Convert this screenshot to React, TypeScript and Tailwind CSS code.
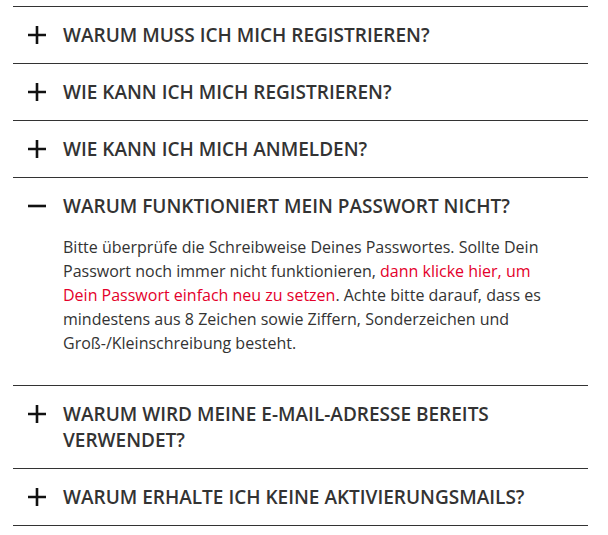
import React, { useState } from 'react'

type Item = { q: string; a?: React.ReactNode }

const items: Item[] = [
  { q: 'Warum muss ich mich registrieren?' },
  { q: 'Wie kann ich mich registrieren?' },
  { q: 'Wie kann ich mich anmelden?' },
  {
    q: 'Warum funktioniert mein Passwort nicht?',
    a: (
      <>
        Bitte überprüfe die Schreibweise Deines Passwortes. Sollte Dein Passwort noch immer nicht funktionieren,{' '}
        <a href="#" className="text-[#e4002b]">
          dann klicke hier, um Dein Passwort einfach neu zu setzen
        </a>
        . Achte bitte darauf, dass es mindestens aus 8 Zeichen sowie Ziffern, Sonderzeichen und Groß-/Kleinschreibung besteht.
      </>
    ),
  },
  { q: 'Warum wird meine E-Mail-Adresse bereits verwendet?' },
  { q: 'Warum erhalte ich keine Aktivierungsmails?' },
]

const Plus = () => (
  <svg width="18" height="18" viewBox="0 0 18 18" className="shrink-0">
    <path d="M9 0v18M0 9h18" stroke="#111" strokeWidth="2.6" />
  </svg>
)

const Minus = () => (
  <svg width="18" height="18" viewBox="0 0 18 18" className="shrink-0">
    <path d="M0 9h18" stroke="#111" strokeWidth="2.6" />
  </svg>
)

export default function App() {
  const [open, setOpen] = useState(3)

  return (
    <div className="bg-white min-h-[535px] pt-[6px] px-[13px] w-[601px] font-['Open_Sans',sans-serif] text-[#333]">
      <ul className="border-t border-[#333]">
        {items.map((item, i) => (
          <li key={i} className="border-b border-[#333]">
            <button
              onClick={() => setOpen(open === i ? -1 : i)}
              className="flex w-full items-start gap-[17px] py-[15px] pl-[15px] pr-4 text-left"
            >
              <span className="flex h-[26px] items-center">{open === i ? <Minus /> : <Plus />}</span>
              <span className="text-[19px] leading-[26px] font-semibold uppercase">{item.q}</span>
            </button>
            {open === i && item.a && (
              <p className="pt-px pb-[30px] pl-[50px] max-w-[540px] text-[16px] leading-[24px]">{item.a}</p>
            )}
          </li>
        ))}
      </ul>
    </div>
  )
}
